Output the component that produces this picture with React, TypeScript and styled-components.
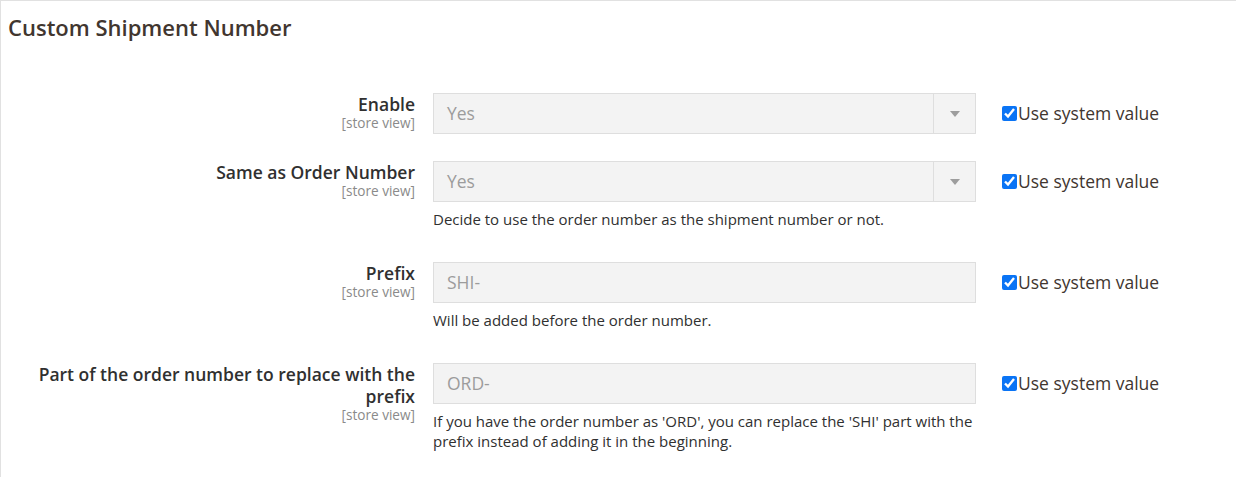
import React from 'react'
import styled, { createGlobalStyle } from 'styled-components'

const GlobalStyle = createGlobalStyle`
  html, body {
    margin: 0;
    padding: 0;
    background: #ffffff;
  }
  body {
    font-family: "Open Sans", "Noto Sans", Arial, sans-serif;
    color: #303030;
  }
`

interface IField {
  label: string
  value: string
  kind: 'select' | 'text'
  note?: string
}

const fields: IField[] = [
  { label: 'Enable', value: 'Yes', kind: 'select' },
  {
    label: 'Same as Order Number',
    value: 'Yes',
    kind: 'select',
    note: 'Decide to use the order number as the shipment number or not.',
  },
  { label: 'Prefix', value: 'SHI-', kind: 'text', note: 'Will be added before the order number.' },
  {
    label: 'Part of the order number to replace with the prefix',
    value: 'ORD-',
    kind: 'text',
    note: "If you have the order number as 'ORD', you can replace the 'SHI' part with the prefix instead of adding it in the beginning.",
  },
]

const App = () => {
  return (
    <>
      <GlobalStyle />
      <Section>
        <Title>Custom Shipment Number</Title>
        <Fields>
          {fields.map((field) => (
            <Row key={field.label}>
              <LabelCell>
                <LabelText>{field.label}</LabelText>
                <Scope>[store view]</Scope>
              </LabelCell>
              <ValueCell>
                <Control>
                  <ControlText>{field.value}</ControlText>
                  {field.kind === 'select' && (
                    <ArrowBox>
                      <svg width="10" height="6" viewBox="0 0 10 6">
                        <path d="M0 0 L10 0 L5 6 Z" fill="#9d9d9d" />
                      </svg>
                    </ArrowBox>
                  )}
                </Control>
                {field.note && <Note>{field.note}</Note>}
              </ValueCell>
              <SystemCell>
                <Check type="checkbox" defaultChecked />
                <span>Use system value</span>
              </SystemCell>
            </Row>
          ))}
        </Fields>
      </Section>
    </>
  )
}

const Section = styled.div`
  border-top: 1px solid #e1e1e1;
  border-left: 1px solid #e1e1e1;
  min-height: 477px;
  box-sizing: border-box;
  padding: 14px 0 0 7px;
`

const Title = styled.h2`
  margin: 0;
  font-size: 22px;
  line-height: 25px;
  font-weight: 600;
  color: #41362f;
`

const Fields = styled.div`
  display: flex;
  flex-direction: column;
  gap: 27px;
  margin-top: 53px;
`

const Row = styled.div`
  display: grid;
  grid-template-columns: 387px 543px auto;
  column-gap: 18px;
  align-items: start;
  margin-left: 20px;
`

const LabelCell = styled.div`
  text-align: right;
`

const LabelText = styled.div`
  font-size: 17.5px;
  line-height: 22px;
  font-weight: 600;
  color: #303030;
`

const Scope = styled.div`
  font-size: 13.6px;
  line-height: 16px;
  color: #8a8a8a;
`

const ValueCell = styled.div`
  display: flex;
  flex-direction: column;
`

const Control = styled.div`
  display: flex;
  align-items: stretch;
  height: 41px;
  box-sizing: border-box;
  border: 1px solid #dedede;
  background: #f3f3f3;
`

const ControlText = styled.div`
  flex: 1;
  display: flex;
  align-items: center;
  padding-left: 13px;
  padding-bottom: 1px;
  font-size: 17.5px;
  color: #9c9c9c;
`

const ArrowBox = styled.div`
  width: 41px;
  border-left: 1px solid #dedede;
  display: flex;
  align-items: center;
  justify-content: center;
`

const Note = styled.div`
  margin: 7px -6px 6px 0;
  font-size: 15px;
  line-height: 20px;
  color: #303030;
`

const SystemCell = styled.label`
  display: flex;
  align-items: center;
  height: 40px;
  margin-left: 8px;
  font-size: 17.5px;
  color: #41362f;
`

const Check = styled.input`
  width: 15px;
  height: 15px;
  margin: 0 1px 0 0;
  accent-color: #0a74f5;
`

export default App
